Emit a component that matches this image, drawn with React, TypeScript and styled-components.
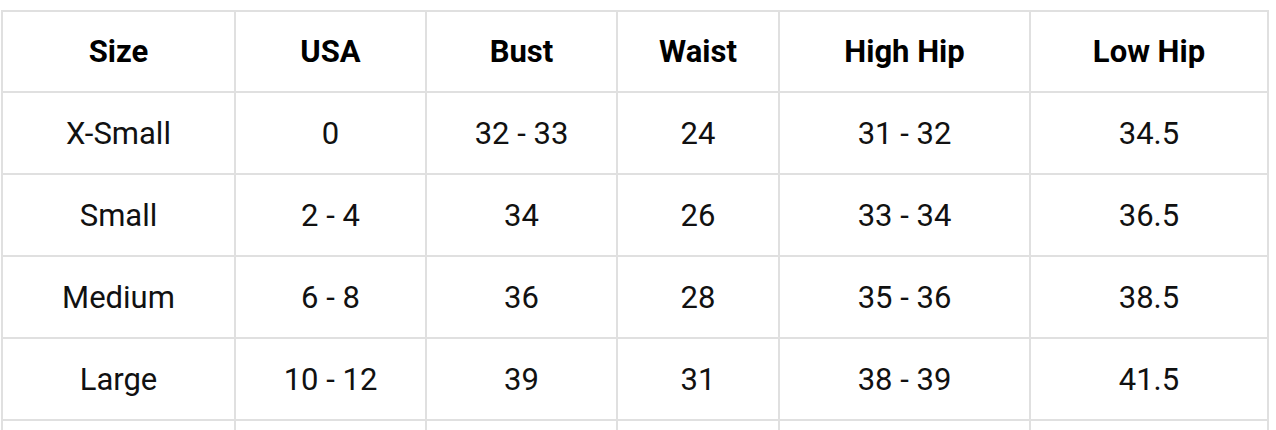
import React from 'react';
import styled, { createGlobalStyle } from 'styled-components';

const GlobalStyle = createGlobalStyle`
body {
  margin: 0;
  background: #fff;
  font-family: Roboto, "Liberation Sans", sans-serif;
  color: #111;
}
`;

const Wrapper = styled.div`
padding: 10px 0 0 1px;
`;

const Table = styled.table`
width: 1266px;
table-layout: fixed;
border-collapse: collapse;
border: 2px solid #e0e0e0;
`;

const HeadCell = styled.th`
height: 79px;
padding: 0;
border: 2px solid #e0e0e0;
text-align: center;
vertical-align: middle;
font-size: 31px;
font-weight: 700;
color: #000;
`;

const Cell = styled.td`
height: 80px;
padding: 0;
border: 2px solid #e0e0e0;
text-align: center;
vertical-align: middle;
font-size: 31px;
font-weight: 400;
color: #111;
`;

const columns = [
  { title: 'Size', width: 233 },
  { title: 'USA', width: 191 },
  { title: 'Bust', width: 191 },
  { title: 'Waist', width: 162 },
  { title: 'High Hip', width: 251 },
  { title: 'Low Hip', width: 238 },
];

const rows = [
  ['X-Small', '0', '32 - 33', '24', '31 - 32', '34.5'],
  ['Small', '2 - 4', '34', '26', '33 - 34', '36.5'],
  ['Medium', '6 - 8', '36', '28', '35 - 36', '38.5'],
  ['Large', '10 - 12', '39', '31', '38 - 39', '41.5'],
  ['X-Large', '14 - 16', '42', '34', '41 - 42', '44.5'],
];

function App() {
  return (
    <Wrapper>
      <GlobalStyle />
      <Table>
        <colgroup>
          {columns.map(col => (
            <col key={col.title} style={{ width: col.width }} />
          ))}
        </colgroup>
        <thead>
          <tr>
            {columns.map(col => (
              <HeadCell key={col.title}>{col.title}</HeadCell>
            ))}
          </tr>
        </thead>
        <tbody>
          {rows.map(row => (
            <tr key={row[0]}>
              {row.map((value, i) => (
                <Cell key={i}>{value}</Cell>
              ))}
            </tr>
          ))}
        </tbody>
      </Table>
    </Wrapper>
  );
}

export default App;
